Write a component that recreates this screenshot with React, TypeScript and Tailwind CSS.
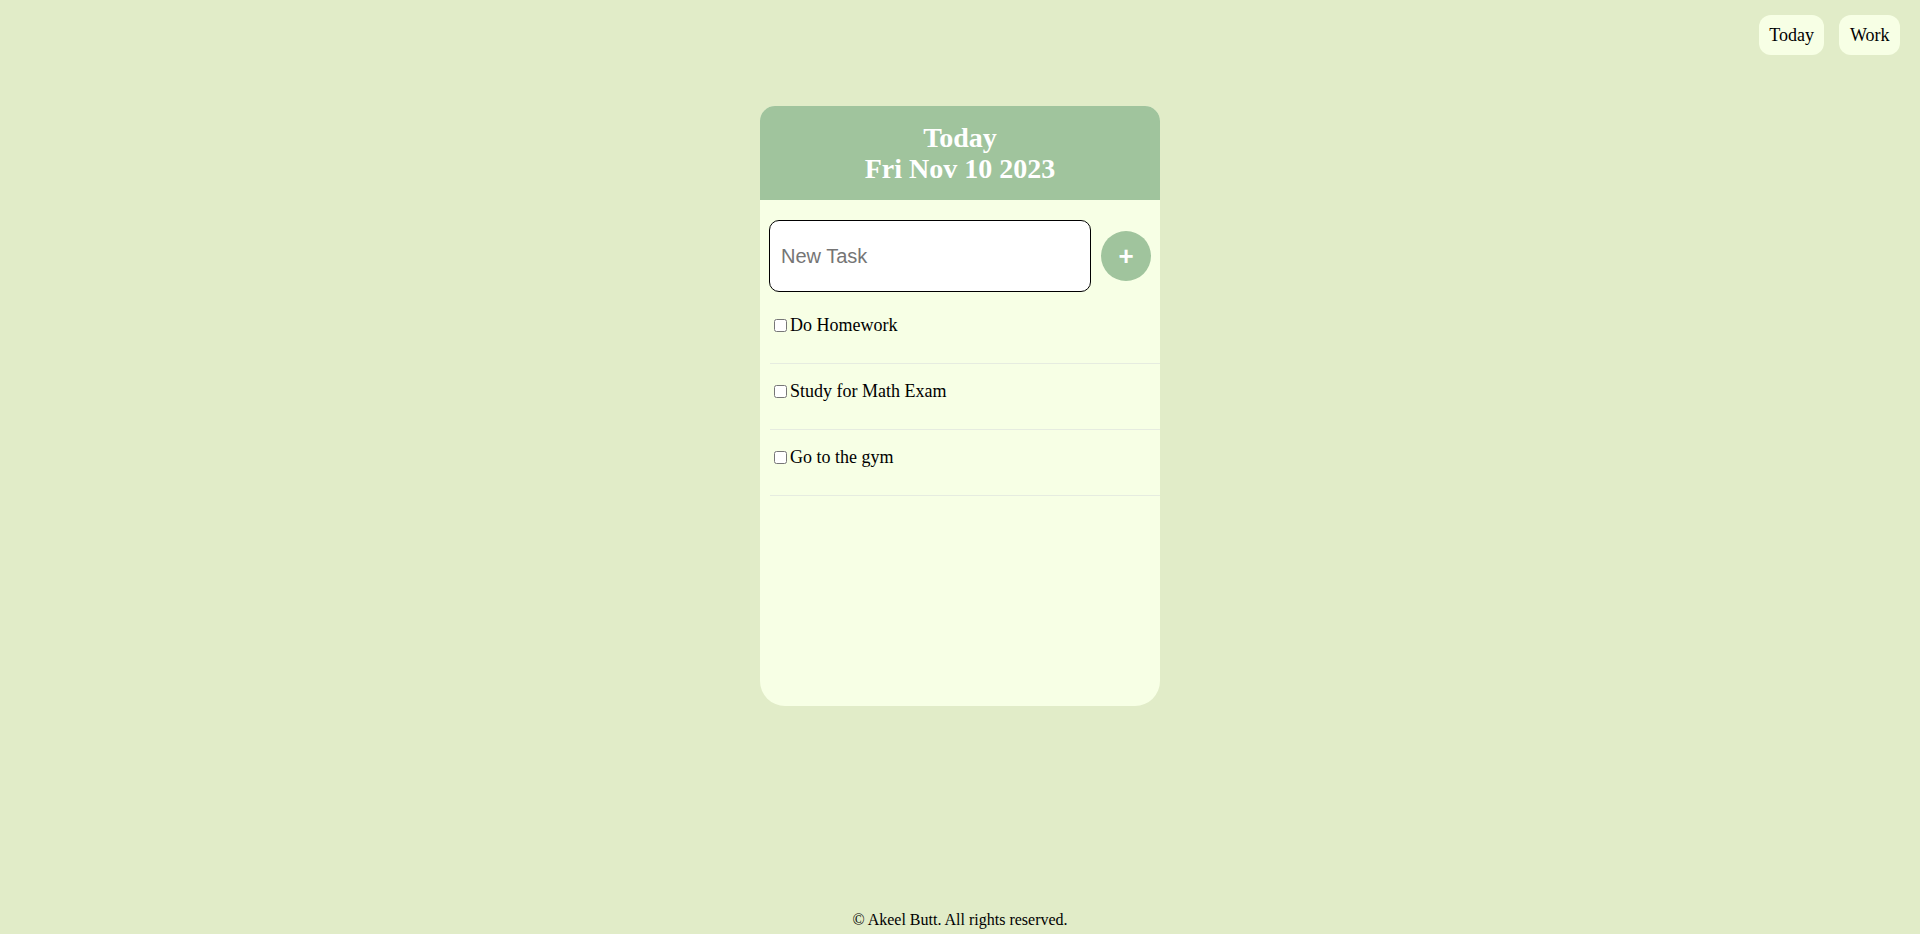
const tasks = ['Do Homework', 'Study for Math Exam', 'Go to the gym']

export default function App() {
  return (
    <div className="min-h-[934px] flex flex-col bg-[#E1ECC8] font-['Liberation_Serif','Times_New_Roman',serif] text-black">
      <nav className="flex justify-end gap-[15px] pt-[15px] pr-[20px]">
        <NavButton label="Today" />
        <NavButton label="Work" />
      </nav>

      <main className="mx-auto mt-[51px] w-[400px] h-[600px] bg-[#F7FFE5] rounded-t-[15px] rounded-b-[25px] overflow-hidden">
        <header className="h-[94px] bg-[#A0C49D] flex flex-col items-center justify-center pb-[1px] text-white font-bold text-[28px] leading-[31px]">
          <div>Today</div>
          <div>Fri Nov 10 2023</div>
        </header>

        <form className="flex items-center gap-[10px] px-[9px] pt-[20px]" onSubmit={e => e.preventDefault()}>
          <input
            type="text"
            placeholder="New Task"
            className="w-[322px] h-[72px] rounded-[10px] border border-black bg-white px-[11px] text-[20px] font-['Liberation_Sans',Arial,sans-serif] placeholder:text-[#757575] outline-none"
          />
          <button
            type="submit"
            className="w-[50px] h-[50px] rounded-full bg-[#A0C49D] text-white text-[26px] font-bold leading-none font-['Liberation_Sans',Arial,sans-serif] flex items-center justify-center pb-[1px]"
          >
            +
          </button>
        </form>

        <div className="mt-[6px]">
          {tasks.map(t => (
            <div key={t} className="ml-[10px] h-[66px] pt-[17px] border-b border-[#e6ece0]">
              <label className="flex items-center text-[18px] leading-[21px]">
                <input type="checkbox" className="ml-[4px] mr-[3px] w-[13px] h-[13px]" />
                {t}
              </label>
            </div>
          ))}
        </div>
      </main>

      <footer className="mt-auto pb-[5px] text-center text-[16px] leading-[18px]">
        © Akeel Butt. All rights reserved.
      </footer>
    </div>
  )
}

function NavButton({ label }: { label: string }) {
  return (
    <button className="h-[40px] px-[10.5px] rounded-[12px] bg-[#F7FFE5] text-[18px]">
      {label}
    </button>
  )
}
